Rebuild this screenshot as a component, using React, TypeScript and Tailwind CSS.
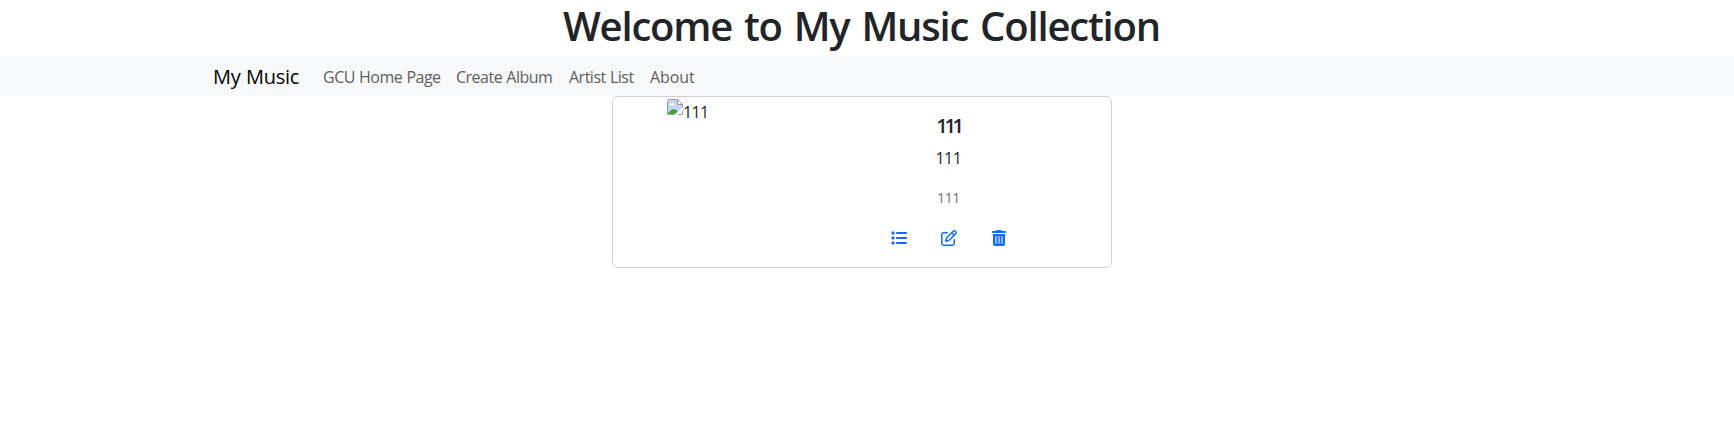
import React from "react";
import { FaList, FaRegPenToSquare, FaTrashCan } from "react-icons/fa6";

function BrokenImage() {
  return (
    <svg width="16" height="16" viewBox="0 0 16 16" className="shrink-0">
      <path d="M1.500.5h9l5 5v10h-15v-14z" fill="#c3d5f5" />
      <path d="M3 6.500c-.8-1.500.6-2.400 1.400-1.600C5 3.200 7 3.600 7 5c1.200 0 1.200 1.500.500 1.500z" fill="#fff" />
      <path d="M1 15c1-3 4-5.500 7-4.500 2 .6 3 2 3.500 4.500z" fill="#3fa535" />
      <path d="M16 8.500L8.500 16H16z" fill="#fff" />
      <path d="M16 8v2l-6 6H7z" fill="#fff" />
      <path d="M7.500 15.500h-7v-14l1-1h9l5 5v3M11 15.500h4.500V12" fill="none" stroke="#9a9a9a" />
      <path d="M10.500.5v5h5z" fill="#fff" stroke="#9a9a9a" />
    </svg>
  );
}

export default function App() {
  return (
    <div className="h-[431px] bg-white text-[#212529] font-['Open_Sans','Noto_Sans',sans-serif]">
      <h1 className="h-[56px] pl-[563px] text-[40px] leading-[51px] font-semibold tracking-[-1.2px] [word-spacing:2.700px] whitespace-nowrap">Welcome to My Music Collection</h1>
      <nav className="flex h-10 items-center bg-[#f8f9fa] pt-px pl-[213px] text-base tracking-[-0.5px] [word-spacing:0.5px] whitespace-nowrap text-[#5d5e5f]">
        <span className="w-[110px] text-[20px] tracking-[-0.25px] text-black">My Music</span>
        <span className="w-[133px]">GCU Home Page</span>
        <span className="w-[113px]">Create Album</span>
        <span className="w-[81px]">Artist List</span>
        <span className="tracking-[-0.1px]">About</span>
      </nav>
      <main className="ml-[612px] flex h-[172px] w-[500px] rounded-md border border-[#d0d0d1]">
        <div className="flex w-[168px] shrink-0 items-start pt-[2px] pl-[54px]">
          <BrokenImage />
          <span className="pt-px leading-[24px] tracking-[-0.6px]">111</span>
        </div>
        <div className="flex flex-1 flex-col items-center pt-[17px] pl-[5px]">
          <h5 className="text-[20px] leading-[24px] font-semibold tracking-[-3.2px]">111</h5>
          <p className="mt-2 leading-[24px] tracking-[-0.4px]">111</p>
          <p className="mt-4 text-[14px] leading-[24px] tracking-[-0.3px] text-[#6c6f72]">111</p>
          <div className="mt-5 flex gap-[34px] text-base text-[#0d6efd]">
            <FaList />
            <FaRegPenToSquare />
            <FaTrashCan />
          </div>
        </div>
      </main>
    </div>
  );
}
